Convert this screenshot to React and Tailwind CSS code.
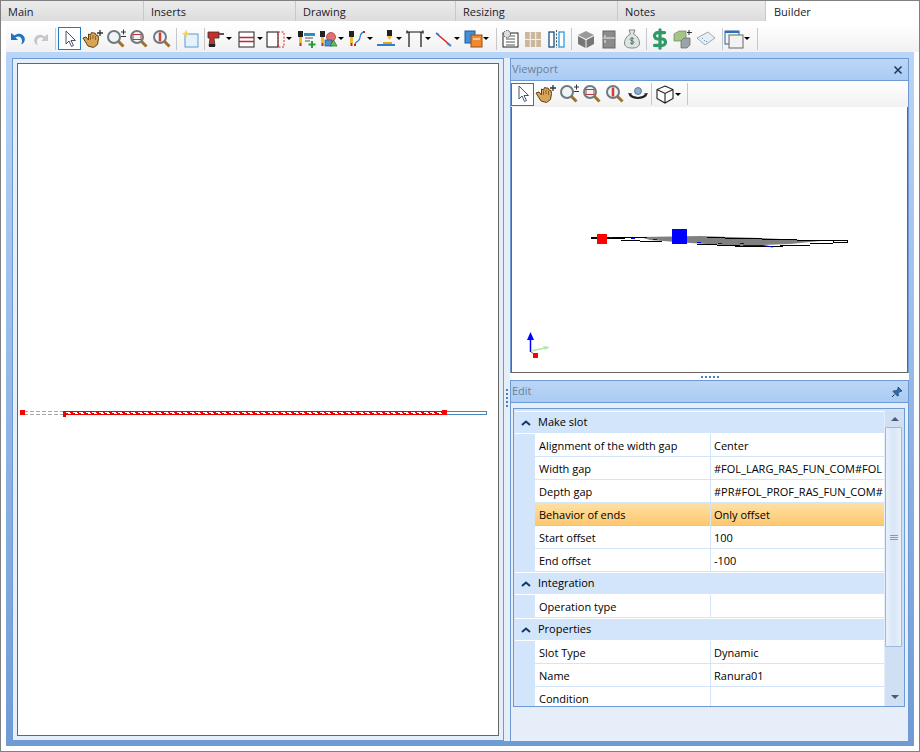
import React from "react";
import { DollarSign } from "lucide-react";

const FONT = "font-['Open_Sans','Liberation_Sans',sans-serif]";

const Svg = ({ children, w = 22 }) => (
  <svg width={w} height="22" viewBox={`0 0 ${w} 22`} className="block shrink-0">
    {children}
  </svg>
);

const Cursor = () => (
  <Svg>
    <path d="M7 3v13l3-3 2.500 5.500 2-1-2.500-5h4.500z" fill="#fff" stroke="#44546a" strokeWidth="1" />
  </Svg>
);
const Undo = () => (
  <Svg>
    <path d="M4 5v7h7l-2.500-2.500c2.500-2 6-1 6.500 3 .2 1.500-.3 3-1 4 3-1 4.500-4 3.500-7C16 5.500 11 4.500 7.500 7.500z" fill="#1f74c4" />
  </Svg>
);
const Redo = () => (
  <Svg>
    <path d="M18 6v7h-7l2.500-2.500c-2.500-2-6-1-6.500 3-.2 1.500.3 3 1 4-3-1-4.500-4-3.500-7C6 6.500 11 5.500 14.500 8.500z" fill="#c4c8cc" />
  </Svg>
);
const Hand = () => (
  <Svg>
    <path d="M1 10l3-1 2.500 3V6l2 1 1-2.500 2 .5 1.500 0 1 2 2 .5.500 3-1 6-4 3-5.500-1.500z" fill="#d8a458" stroke="#5f3f12" strokeWidth="1" />
    <path d="M8.500 8v4M11 7v4M13.500 8v4" stroke="#7c5418" strokeWidth=".8" />
    <path d="M15 5h6M18 2v6" stroke="#333" strokeWidth="1.300" />
  </Svg>
);
const Lens = ({ children }) => (
  <Svg>
    <circle cx="9" cy="9" r="6" fill="#eef3f6" stroke="#6f7a80" strokeWidth="2" />
    <path d="M13.500 13.500l5 5" stroke="#a0702c" strokeWidth="3" />
    {children}
  </Svg>
);
const ZoomPlus = () => (
  <Lens>
    <path d="M16 4h5M18.500 1.500v5M16 8.500h5" stroke="#333" strokeWidth="1" />
  </Lens>
);
const ZoomWin = () => (
  <Lens>
    <rect x="5" y="6.500" width="8" height="5" fill="none" stroke="#b8393a" strokeWidth="1" />
  </Lens>
);
const ZoomExt = () => (
  <Lens>
    <path d="M9 4.500v9" stroke="#d8383a" strokeWidth="2.500" />
  </Lens>
);
const NewDoc = () => (
  <Svg>
    <rect x="6" y="6" width="13" height="13" fill="#e6f1fb" stroke="#5d9bd0" />
    <path d="M7 1.500l1.200 3 3 1.200-3 1.200-1.200 3-1.200-3-3-1.200 3-1.200z" fill="#f5d44a" />
  </Svg>
);
const Drill = () => (
  <Svg>
    <path d="M3 4h11v6H9l1 8H4l1-8H3z" fill="#c9302c" stroke="#333" strokeWidth=".8" />
    <path d="M14 6h5" stroke="#555" strokeWidth="2" />
    <path d="M4 16h6v3H4z" fill="#222" />
  </Svg>
);
const Slots = () => (
  <Svg>
    <rect x="3" y="4" width="15" height="15" fill="#fff" stroke="#222" />
    <path d="M3 9.500h15M3 13.500h15" stroke="#c8203c" strokeWidth="1.300" />
  </Svg>
);
const PanelRed = () => (
  <Svg>
    <rect x="2" y="4" width="11" height="15" fill="#fff" stroke="#111" />
    <rect x="13" y="4" width="6" height="15" fill="none" stroke="#e02020" strokeDasharray="2 1.500" />
  </Svg>
);
const Mill = ({ children }) => (
  <Svg>
    <path d="M3 3h5v6H7v6H4V9H3z" fill="#222" />
    <path d="M4 9h3v6H4z" fill="#e8c030" />
    <path d="M4.500 15h2v3h-2z" fill="#d02020" />
    {children}
  </Svg>
);
const MillTable = () => (
  <Mill>
    <rect x="9" y="5" width="11" height="3" fill="#2a8fc9" />
    <path d="M10 10h8M10 13h5" stroke="#555" />
    <path d="M16 13h2v2.500h2.500v2H18V20h-2v-2.500h-2.500v-2H16z" fill="#20a030" />
  </Mill>
);
const MillShapes = () => (
  <Mill>
    <circle cx="14" cy="9" r="4.500" fill="#e07070" stroke="#a03030" strokeWidth=".7" />
    <rect x="8" y="12" width="7" height="6" fill="#4a90d0" stroke="#205080" strokeWidth=".7" />
    <path d="M13 18l3.500-6 3.500 6z" fill="#60c060" stroke="#207020" strokeWidth=".7" />
  </Mill>
);
const MillCurve = () => (
  <Mill>
    <path d="M18 4c-6 1-2 7-6 9-2 1-3 2-3 4" fill="none" stroke="#2a80d0" strokeWidth="1.300" />
    <path d="M17 3h2v2h-2zM8 16h2v2H8z" fill="#d02020" />
  </Mill>
);
const MillFlat = () => (
  <Svg>
    <path d="M12 2h5v6h-1l-1 3h-1l-1-3h-1z" fill="#222" />
    <path d="M12 8h5l-2.500 4z" fill="#f0c030" />
    <path d="M2 17h18" stroke="#2a80d0" strokeWidth="2" />
    <path d="M8 14h9v2H8z" fill="#e8a020" />
  </Svg>
);
const Frame = () => (
  <Svg>
    <path d="M3 4h16M5 4v15M17 4v15M3 2.500V5.500M19 2.500V5.500" fill="none" stroke="#111" strokeWidth="1.200" />
  </Svg>
);
const Line = () => (
  <Svg>
    <path d="M4 6l13 11" stroke="#e02020" strokeWidth="1.500" />
    <path d="M3 5l3 2M14 15l4 3" stroke="#3a80d0" strokeWidth="2" />
  </Svg>
);
const Stack = () => (
  <Svg>
    <rect x="3" y="3" width="10" height="12" fill="#3f8fdb" stroke="#1c5c9c" />
    <rect x="9" y="7" width="11" height="12" fill="#ee8a30" stroke="#a04c10" />
    <path d="M11 11h7" stroke="#fff" />
  </Svg>
);
const Gear = () => (
  <Svg>
    <rect x="4" y="5" width="15" height="14" fill="#fff" stroke="#222" />
    <path d="M7 8h9M7 11h9M7 14h9M7 17h9" stroke="#555" />
    <circle cx="8" cy="6" r="3.500" fill="#ddd" stroke="#444" strokeDasharray="1.500 1" />
  </Svg>
);
const Drawers = () => (
  <Svg>
    <path d="M3 4h16v15H3z" fill="#c9b79e" />
    <path d="M3 11.500h16M8.300 4v15M13.700 4v15" stroke="#f3eee6" strokeWidth="1.200" />
  </Svg>
);
const Columns = () => (
  <Svg>
    <rect x="4" y="4" width="5" height="15" fill="#fff" stroke="#1c4f80" strokeWidth="1.300" />
    <rect x="14" y="4" width="5" height="15" fill="#fff" stroke="#2f9be0" strokeWidth="1.300" />
    <path d="M11.500 2v18" stroke="#555" strokeDasharray="2 1.500" />
  </Svg>
);
const Box3 = () => (
  <Svg>
    <path d="M3 7l8-4 8 4-8 4z" fill="#9a9a9a" />
    <path d="M3 8l7.500 4v8L3 16zM19 8l-7.500 4v8l7.500-4z" fill="#777" />
  </Svg>
);
const Fridge = () => (
  <Svg>
    <rect x="5" y="3" width="12" height="17" fill="#8b8b8b" stroke="#666" />
    <path d="M5 10h12" stroke="#eee" />
    <path d="M7 7v2M7 12v3" stroke="#eee" />
  </Svg>
);
const Money = () => (
  <Svg>
    <path d="M8 2h6l-1.500 4c4 2 6 6 6 9 0 3-2 5-7.500 5S3.500 18 3.500 15c0-3 2-7 6-9z" fill="#dfe4e2" stroke="#7d8a86" />
    <path d="M13 11c-1-1.200-4-1-4 .5s4 1 4 2.800-3 1.500-4 .5M11 9v8" fill="none" stroke="#4a6a60" strokeWidth=".9" />
  </Svg>
);
const Dollar = () => <DollarSign size={22} strokeWidth={3.5} color="#2f9a68" className="block shrink-0" />;
const Cubes = () => (
  <Svg>
    <path d="M2 6l5-3h7v7l-4 3H2z" fill="#a4c48a" stroke="#6a8a50" strokeWidth=".7" />
    <path d="M9 13l3-3h6v7l-3 3H9z" fill="#9aa4aa" stroke="#666" strokeWidth=".7" />
    <path d="M17 2v5M15 4.500h5" stroke="#333" />
  </Svg>
);
const Tag = () => (
  <Svg>
    <path d="M2 10l11-6 7 6-10 7z" fill="#e8eef2" stroke="#a0aab0" />
    <path d="M7 10l1 1M9 12l1 1M11 14l1-1" stroke="#5a9bd0" />
  </Svg>
);
const Windows = () => (
  <Svg>
    <rect x="2" y="3" width="14" height="13" fill="#f4f4f4" stroke="#2a5f9c" />
    <rect x="2" y="3" width="14" height="2" fill="#2a6fb8" />
    <rect x="6" y="7" width="14" height="13" fill="#f2f2f2" stroke="#666" />
  </Svg>
);
const Cube = () => (
  <Svg>
    <path d="M11 3l8 3.500v9L11 20l-8-4.500v-9zM3 6.500l8 4 8-4M11 10.500V20" fill="#fff" stroke="#222" strokeWidth="1.100" />
  </Svg>
);
const Orbit = () => (
  <Svg>
    <circle cx="11" cy="8" r="3.500" fill="#8ab0d8" stroke="#456" strokeWidth=".7" />
    <path d="M3 12c4 4 12 4 16 0" fill="none" stroke="#222" strokeWidth="2" />
    <path d="M1 10l4 .5-2 3zM21 10l-4 .5 2 3z" fill="#222" />
  </Svg>
);

const Arrow = () => (
  <span className="-ml-px h-0 w-0 shrink-0 border-x-[3px] border-t-[3px] border-x-transparent border-t-black" />
);
const Sep = ({ ml = 0, mr = 0 }) => (
  <span className="h-[22px] w-px shrink-0 bg-[#c4c8cc]" style={{ marginLeft: ml, marginRight: mr }} />
);
const Tool = ({ icon: Icon, arrow, active }) => (
  <span
    className={`flex h-[23px] shrink-0 items-center ${arrow ? "w-[29px]" : "w-[23px] justify-center"} ${active ? "border border-[#1f7ac8] bg-white" : ""}`}
  >
    <Icon />
    {arrow && <Arrow />}
  </span>
);

const tabs = [
  ["Main", "w-[143px]"],
  ["Inserts", "w-[152px]"],
  ["Drawing", "w-[160px]"],
  ["Resizing", "w-[162px]"],
  ["Notes", "w-[148px]"],
];

const Tabs = () => (
  <div className="flex h-[21px] shrink-0 border-t border-[#808080] text-[11px] text-[#1a1a2a]">
    {tabs.map(([name, w]) => (
      <div
        key={name}
        className={`${w} flex items-center border-r border-[#c8c8c8] bg-gradient-to-b from-[#ececec] to-[#dcdcdc] pl-[7px] pt-[2px]`}
      >
        {name}
      </div>
    ))}
    <div className="flex flex-1 items-center bg-white pl-[8px] pt-[2px]">Builder</div>
  </div>
);

const Toolbar = () => (
  <div className="flex h-[31px] shrink-0 items-end bg-white pl-[5px]">
    <div className="flex h-[29px] flex-1 items-center rounded-tl-[4px] bg-gradient-to-b from-white to-[#f1f1f1] pr-1 pt-[2px]">
      <Tool icon={Undo} />
      <Tool icon={Redo} />
      <Sep ml={3} mr={2} />
      <Tool icon={Cursor} active />
      <Tool icon={Hand} />
      <Tool icon={ZoomPlus} />
      <Tool icon={ZoomWin} />
      <Tool icon={ZoomExt} />
      <Sep ml={3} mr={1} />
      <Tool icon={NewDoc} />
      <Sep ml={3} />
      <span className="mr-[2px] flex">
        <Tool icon={Drill} arrow />
      </span>
      <Tool icon={Slots} arrow />
      <Tool icon={PanelRed} arrow />
      <Tool icon={MillTable} />
      <Tool icon={MillShapes} arrow />
      <Tool icon={MillCurve} arrow />
      <Tool icon={MillFlat} arrow />
      <Tool icon={Frame} arrow />
      <Tool icon={Line} arrow />
      <Tool icon={Stack} arrow />
      <Sep ml={5} mr={1} />
      <Tool icon={Gear} />
      <Tool icon={Drawers} />
      <Tool icon={Columns} />
      <Sep ml={4} mr={2} />
      <Tool icon={Box3} />
      <Tool icon={Fridge} />
      <Tool icon={Money} />
      <Sep ml={3} mr={1} />
      <Tool icon={Dollar} />
      <Tool icon={Cubes} />
      <Tool icon={Tag} />
      <Sep ml={5} />
      <Tool icon={Windows} arrow />
      <Sep ml={5} />
    </div>
  </div>
);

// the slot as drawn on the 2d canvas, coordinates are canvas pixels
const Canvas2d = () => {
  const ticks = [];
  for (let x = 48; x < 420; x += 6.5) ticks.push(Math.round(x));
  return (
    <svg width="480" height="670" className="block">
      <path d="M6 347.500h40M6 350.500h40" stroke="#a8a8a8" strokeDasharray="4 2" />
      <rect x="46" y="347" width="379" height="4" fill="#ee0000" />
      {ticks.map((x) => (
        <g key={x} fill="#fff">
          <rect x={x} y="348" width="4" height="1" />
          <rect x={x + 2} y="349" width="3" height="1" />
        </g>
      ))}
      <rect x="45" y="347" width="3" height="6" fill="#ee0000" />
      <rect x="425.500" y="347.500" width="43" height="3" fill="#fff" stroke="#4a86b8" />
      <rect x="2" y="346" width="5" height="5" fill="#ff0000" />
      <rect x="424" y="346" width="5" height="5" fill="#ff0000" />
    </svg>
  );
};

// perspective view of the same part, coordinates are viewport pixels
const Canvas3d = () => (
  <svg width="395" height="264" className="block">
    <path d="M128 130l60-1 60 2 60 3-30 3-50 2-50-3-40-3z" fill="#808080" />
    <path d="M79 131h34" stroke="#000" strokeWidth="2" />
    <g fill="none" stroke="#000">
      <path d="M113 130.500h22M109 133.500h19M128 134.500h22M185 137.500h20M205 138.500h23M223 139.500h48" />
      <path d="M195 130.500h18M213 131.500h37M250 132.500h35M285 133.500h36M268 138.500h30M298 136.500h23" />
      <rect x="321.500" y="133.500" width="14" height="2" />
    </g>
    <path d="M97 130.500h3M119 131.500h4M141 132.500h4M185 135.500h4M206 136.500h4M228 136.500h4" stroke="#0000ff" />
    <path d="M231 138.500h20l10 1.500" fill="none" stroke="#0000ff" />
    <rect x="85" y="127" width="10" height="10" fill="#ff0000" />
    <rect x="160" y="122" width="15" height="15" fill="#0000ff" />
    <path d="M18.500 245v-15" stroke="#0000ff" strokeWidth="1.500" />
    <path d="M18.500 225l3.500 8h-7z" fill="#0000ff" />
    <path d="M19 244l14-3" stroke="#a8eca8" strokeWidth="1.500" />
    <path d="M31 239l7 1-5 3z" fill="#a8eca8" />
    <path d="M19 245l3 2" stroke="#e03030" />
    <rect x="21" y="246" width="5" height="5" fill="#ff0000" />
  </svg>
);

const Section = ({ name }) => (
  <div className="flex h-[23px] items-center border-y border-white bg-[#d3e5fa] text-[11px] text-black">
    <svg width="10" height="6" viewBox="0 0 10 6" className="ml-[6px] mr-[7px]">
      <path d="M1 5l4-3.500L9 5" fill="none" stroke="#15376b" strokeWidth="2" />
    </svg>
    {name}
  </div>
);

const Row = ({ label, value, selected }) => (
  <div
    className={`ml-[20px] flex h-[23px] shrink-0 items-center border-b pt-[2px] text-[11px] text-black ${
      selected
        ? "border-[#fbc26a] bg-gradient-to-b from-[#fee1a4] to-[#fdc76f]"
        : "border-[#d3e5fa] bg-white"
    }`}
  >
    <div className="w-[175px] shrink-0 overflow-hidden whitespace-nowrap pl-[4px]">{label}</div>
    <div className="-mt-[2px] flex h-[23px] flex-1 items-center overflow-hidden whitespace-nowrap border-l border-[#d3e5fa] pl-[3px] pt-[2px]">
      {value}
    </div>
  </div>
);

const ScrollBar = () => (
  <div className="flex w-[20px] shrink-0 flex-col border-l border-[#e6eef9] bg-[#cfe0f4]">
    <div className="flex h-[16px] shrink-0 items-center justify-center">
      <span className="h-0 w-0 border-x-[4px] border-b-[4px] border-x-transparent border-b-[#4a5a70]" />
    </div>
    <div className="mr-[2px] flex h-[220px] shrink-0 items-center justify-center rounded-[1px] border border-[#9db8d8] bg-gradient-to-r from-[#e9f1fb] via-[#d8e6f6] to-[#e9f1fb]">
      <div className="flex flex-col gap-[1px]">
        <span className="h-px w-[8px] bg-[#7d9cc4]" />
        <span className="h-px w-[8px] bg-[#7d9cc4]" />
        <span className="h-px w-[8px] bg-[#7d9cc4]" />
      </div>
    </div>
    <div className="flex flex-1 items-end justify-center pb-[7px]">
      <span className="h-0 w-0 border-x-[4px] border-t-[4px] border-x-transparent border-t-[#4a5a70]" />
    </div>
  </div>
);

const PropertyGrid = () => (
  <div className="ml-[2px] mr-[3px] mt-[5px] flex h-[299px] shrink-0 border border-[#6e9ad4] bg-[#d3e5fa] pl-[1px] pt-[2px]">
    <div className="min-w-0 flex-1 overflow-hidden">
      <Section name="Make slot" />
      <Row label="Alignment of the width gap" value="Center" />
      <Row label="Width gap" value="#FOL_LARG_RAS_FUN_COM#FOL" />
      <Row label="Depth gap" value="#PR#FOL_PROF_RAS_FUN_COM#" />
      <Row label="Behavior of ends" value="Only offset" selected />
      <Row label="Start offset" value="100" />
      <Row label="End offset" value="-100" />
      <Section name="Integration" />
      <Row label="Operation type" value="" />
      <Section name="Properties" />
      <Row label="Slot Type" value="Dynamic" />
      <Row label="Name" value="Ranura01" />
      <Row label="Condition" value="" />
    </div>
    <ScrollBar />
  </div>
);

const PanelHeader = ({ title, children }) => (
  <div className="flex h-[22px] shrink-0 items-center justify-between border-b border-[#6e9ad4] bg-gradient-to-b from-[#bcd6f6] to-[#a9cbf3] px-[1px] text-[11px] text-[#6a7f9c]">
    {title}
    {children}
  </div>
);

const Viewport = () => (
  <div className="flex h-[315px] shrink-0 flex-col border-x border-t border-[#6e9ad4] bg-white">
    <PanelHeader title="Viewport">
      <svg width="10" height="10" viewBox="0 0 10 10" className="mr-[4px]">
        <path d="M1.500 1.500l7 7M8.500 1.500l-7 7" stroke="#16375f" strokeWidth="1.500" />
      </svg>
    </PanelHeader>
    <div className="flex h-[26px] shrink-0 items-center bg-gradient-to-b from-white to-[#f1f1f1]">
      <Tool icon={Cursor} active />
      <Tool icon={Hand} />
      <Tool icon={ZoomPlus} />
      <Tool icon={ZoomWin} />
      <Tool icon={ZoomExt} />
      <Tool icon={Orbit} />
      <Sep ml={2} mr={2} />
      <Tool icon={Cube} arrow />
      <Sep ml={4} />
    </div>
    <div className="min-h-0 flex-1 overflow-hidden border-x border-b border-[#666]">
      <Canvas3d />
    </div>
  </div>
);

const Edit = () => (
  <div className="relative flex min-h-0 flex-1 flex-col border-x border-t border-[#6e9ad4] bg-[#e6eef9]">
    <PanelHeader title="Edit">
      <svg width="12" height="12" viewBox="0 0 12 12" className="mr-[4px]">
        <path d="M7 1l4 4-2 .5-2 2 .5 2L6.500 10 2 5.500 3 4.500l2 .5 2-2z" fill="#2a6fb8" stroke="#12305a" strokeWidth=".7" />
        <path d="M3.500 8.500L1 11" stroke="#12305a" />
      </svg>
    </PanelHeader>
    <PropertyGrid />
  </div>
);

const App = () => (
  <div
    className={`${FONT} flex h-[752px] w-[920px] flex-col overflow-hidden border-x border-b border-[#808080] bg-white text-[#10101a]`}
  >
    <Tabs />
    <Toolbar />
    <div className="flex min-h-0 flex-1 px-[5px] pb-[5px]">
      <div className="flex min-w-0 flex-1 bg-gradient-to-b from-[#b9d5f7] to-[#6f9bd5] pb-[5px] pl-[6px] pr-[6px] pt-[6px]">
        <div className="flex min-w-0 flex-1 bg-white">
          <div className="flex w-[492px] shrink-0 border border-[#6e9ad4] bg-[#e6eef9] p-[4px]">
            <div className="h-full w-[482px] border border-[#666] bg-white">
              <Canvas2d />
            </div>
          </div>
          <div className="relative w-[6px] shrink-0 bg-[#e6eef9]">
            <div className="absolute left-[2px] top-[331px] h-[18px] w-[2px] border-l-2 border-dotted border-[#4a7fc0]" />
          </div>
          <div className="flex w-[399px] shrink-0 flex-col bg-white">
            <Viewport />
            <div className="flex h-[7px] shrink-0 items-center justify-center">
              <span className="h-px w-[18px] border-t-2 border-dotted border-[#4a7fc0]" />
            </div>
            <Edit />
          </div>
        </div>
      </div>
    </div>
  </div>
);

export default App;
